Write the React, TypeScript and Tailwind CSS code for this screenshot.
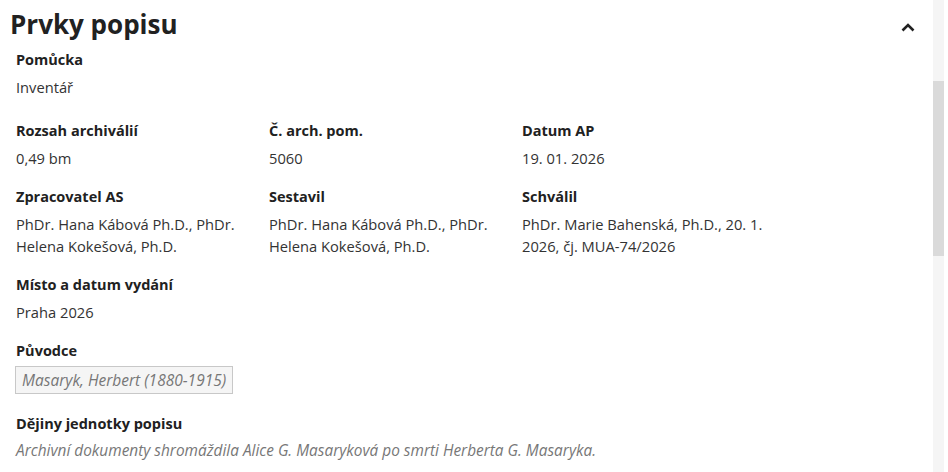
import React from "react";

type Field = { label: string; value: string };

const FieldBlock: React.FC<Field> = ({ label, value }) => (
  <div>
    <div className="text-[14.5px] leading-[22px] font-bold text-[#212121] mb-[5px]">{label}</div>
    <div className="text-[14.7px] leading-[22px] text-[#333333]">{value}</div>
  </div>
);

const rows: Field[][] = [
  [
    { label: "Rozsah archiválií", value: "0,49 bm" },
    { label: "Č. arch. pom.", value: "5060" },
    { label: "Datum AP", value: "19. 01. 2026" },
  ],
  [
    { label: "Zpracovatel AS", value: "PhDr. Hana Kábová Ph.D., PhDr. Helena Kokešová, Ph.D." },
    { label: "Sestavil", value: "PhDr. Hana Kábová Ph.D., PhDr. Helena Kokešová, Ph.D." },
    { label: "Schválil", value: "PhDr. Marie Bahenská, Ph.D., 20. 1. 2026, čj. MUA-74/2026" },
  ],
];

export default function App() {
  return (
    <div className="flex w-[948px] h-[472px] overflow-hidden bg-white" style={{ fontFamily: "'Open Sans', 'Noto Sans', sans-serif" }}>
      <div className="flex-1 min-w-0">
        {/* header */}
        <div className="flex items-center justify-between pl-[10px] pr-[18px] pt-[6px]">
          <h2 className="text-[26px] leading-[36px] font-bold text-[#212121]">Prvky popisu</h2>
          <svg width="14" height="9" viewBox="0 0 14 9" className="mt-[6px]">
            <path d="M1.5 7.5 L7 2 L12.5 7.5" fill="none" stroke="#212121" strokeWidth="2.6" />
          </svg>
        </div>

        <div className="pl-[16px] pt-[7px]">
          <div className="mb-[22px]">
            <FieldBlock label="Pomůcka" value="Inventář" />
          </div>

          {rows.map((row, i) => (
            <div key={i} className="grid grid-cols-[248px_248px_248px] gap-x-[5px] mb-[17px]">
              {row.map((f) => (
                <FieldBlock key={f.label} {...f} />
              ))}
            </div>
          ))}

          <div className="mb-[17px]">
            <FieldBlock label="Místo a datum vydání" value="Praha 2026" />
          </div>

          <div className="mb-[19px]">
            <div className="text-[14.5px] leading-[22px] font-bold text-[#212121] mb-[4px]">Původce</div>
            <div className="inline-block -ml-px border border-[#c8c8c8] bg-[#f5f5f5] px-[6px] h-[28px] text-[15.5px] leading-[26px] italic text-[#777777]">
              Masaryk, Herbert (1880-1915)
            </div>
          </div>

          <div>
            <div className="text-[14.5px] leading-[22px] font-bold text-[#212121] mb-[5px]">Dějiny jednotky popisu</div>
            <div className="text-[15.4px] leading-[22px] italic text-[#777777]">
              Archivní dokumenty shromáždila Alice G. Masaryková po smrti Herberta G. Masaryka.
            </div>
          </div>
        </div>
      </div>

      {/* scrollbar */}
      <div className="w-[11px] h-full bg-[#f5f5f5] flex flex-col">
        <div className="mt-[81px] h-[175px] bg-[#dadada]" />
      </div>
      <div className="w-[4px]" />
    </div>
  );
}
